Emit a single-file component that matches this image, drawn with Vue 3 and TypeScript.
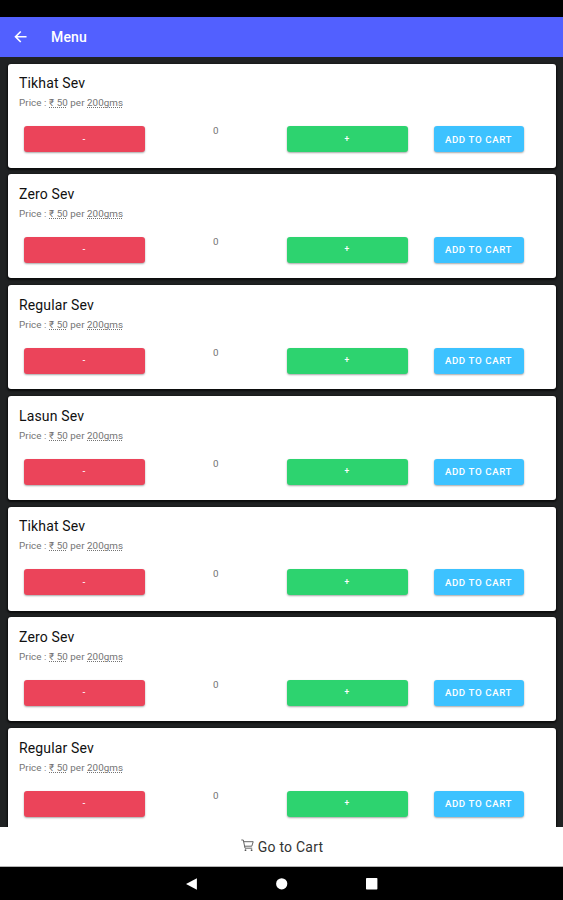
<script setup lang="ts">
import { ref } from 'vue'

interface MenuItem {
  name: string
  price: number
  unit: string
  count: number
}

const names: string[] = ['Tikhat Sev', 'Zero Sev', 'Regular Sev', 'Lasun Sev', 'Tikhat Sev', 'Zero Sev', 'Regular Sev']
const items = ref<MenuItem[]>(names.map((name) => ({ name, price: 50, unit: '200gms', count: 0 })))

function change(item: MenuItem, delta: number): void {
  item.count = Math.max(0, item.count + delta)
}
</script>

<template>
  <div class="screen">
    <div class="status-bar"></div>
    <header class="toolbar">
      <svg class="back" viewBox="0 0 14 14" aria-label="Back">
        <path d="M13 7H1.8M7 1.6L1.6 7L7 12.4" fill="none" stroke="#fff" stroke-width="1.7" />
      </svg>
      <h1>Menu</h1>
    </header>

    <main class="content">
      <section v-for="(item, i) in items" :key="i" class="card">
        <h2>{{ item.name }}</h2>
        <p class="price">Price : <span class="term">₹ {{ item.price }}</span> per <span class="term">{{ item.unit }}</span></p>
        <div class="row">
          <button class="btn sign red" @click="change(item, -1)">-</button>
          <span class="count">{{ item.count }}</span>
          <button class="btn sign green" @click="change(item, 1)">+</button>
          <button class="btn blue">ADD TO CART</button>
        </div>
      </section>
    </main>

    <footer class="cart-bar">
      <svg class="cart" viewBox="0 0 13 13">
        <path d="M0.3 1H2.3L4 9.2H11.2M2.7 2.7H12.2L10.8 7.2H3.7" fill="none" stroke="#555" stroke-width="0.9" />
        <circle cx="4.5" cy="11.2" r="0.9" fill="#555" />
        <circle cx="10.6" cy="11.2" r="0.9" fill="#555" />
      </svg>
      <span>Go to Cart</span>
    </footer>

    <nav class="system-nav">
      <svg viewBox="0 0 12 12"><path d="M10.9 0.3V11.7L0 6Z" fill="#fff" /></svg>
      <svg viewBox="0 0 12 12"><circle cx="5.7" cy="5.8" r="5.6" fill="#fff" /></svg>
      <svg viewBox="0 0 12 12"><rect x="0" y="0.1" width="11.4" height="11.4" rx="0.7" fill="#fff" /></svg>
    </nav>
  </div>
</template>

<style>
body {
  margin: 0;
  background: #000;
}
</style>

<style scoped>
.screen {
  display: flex;
  flex-direction: column;
  height: 900px;
  overflow: hidden;
  background: #202223;
  font-family: Roboto, 'Noto Sans', sans-serif;
}
.status-bar {
  flex: none;
  height: 17px;
  background: #000;
}
.toolbar {
  flex: none;
  display: flex;
  align-items: center;
  height: 39.5px;
  padding-left: 13.5px;
  background: #5260ff;
  color: #fff;
}
.back {
  width: 13.5px;
  height: 13.5px;
}
h1 {
  margin: 0 0 0 24px;
  font-size: 14px;
  line-height: 20px;
  font-weight: 500;
  letter-spacing: 0.15px;
}
.content {
  flex: 1;
  min-height: 0;
  display: flex;
  flex-direction: column;
  gap: 6.75px;
  padding: 7px 7px 0 7.5px;
  overflow: hidden;
}
.card {
  flex: none;
  box-sizing: border-box;
  height: 104px;
  padding: 10.8px 11px 0 11.5px;
  border-radius: 3px;
  background: #fff;
  box-shadow: 0 1px 2px 1px rgba(0, 0, 0, 0.65);
}
h2 {
  margin: 0;
  font-size: 14px;
  line-height: 18px;
  font-weight: 400;
  letter-spacing: 0.15px;
  color: #111;
}
.price {
  margin: 4.2px 0 0;
  font-size: 9.8px;
  line-height: 14px;
  letter-spacing: 0.07px;
  color: #747474;
}
.term {
  text-decoration: underline dotted;
  text-underline-offset: 1px;
}
.row {
  display: grid;
  grid-template-columns: 121.5px 141.5px 121.5px 91px;
  align-items: start;
  padding: 15.8px 0 0 4.5px;
}
.btn {
  height: 26px;
  padding: 0;
  border: 0;
  border-radius: 3px;
  color: #fff;
  font-family: inherit;
  font-size: 9.7px;
  line-height: 25.5px;
  font-weight: 500;
  letter-spacing: 0.6px;
  box-shadow: 0 1px 2px rgba(0, 0, 0, 0.35);
}
.sign {
  font-size: 8.5px;
}
.red {
  background: #eb445a;
}
.green {
  background: #2dd36f;
}
.blue {
  margin-left: 25.5px;
  width: 90px;
  background: #3dc2ff;
}
.count {
  text-align: center;
  font-size: 9.8px;
  line-height: 9.6px;
  color: #737373;
}
.cart-bar {
  flex: none;
  display: flex;
  justify-content: center;
  gap: 4px;
  box-sizing: border-box;
  height: 40px;
  padding: 10.4px 0 0 1px;
  border-bottom: 1px solid #b5b5b5;
  background: #fff;
  color: #333;
  font-size: 14px;
  line-height: 20px;
  letter-spacing: 0.22px;
}
.cart {
  width: 13px;
  height: 13px;
  margin-top: 1.5px;
}
.system-nav {
  flex: none;
  display: flex;
  align-items: center;
  justify-content: center;
  gap: 78px;
  height: 33px;
  background: #000;
}
.system-nav svg {
  width: 12px;
  height: 12px;
}
</style>
